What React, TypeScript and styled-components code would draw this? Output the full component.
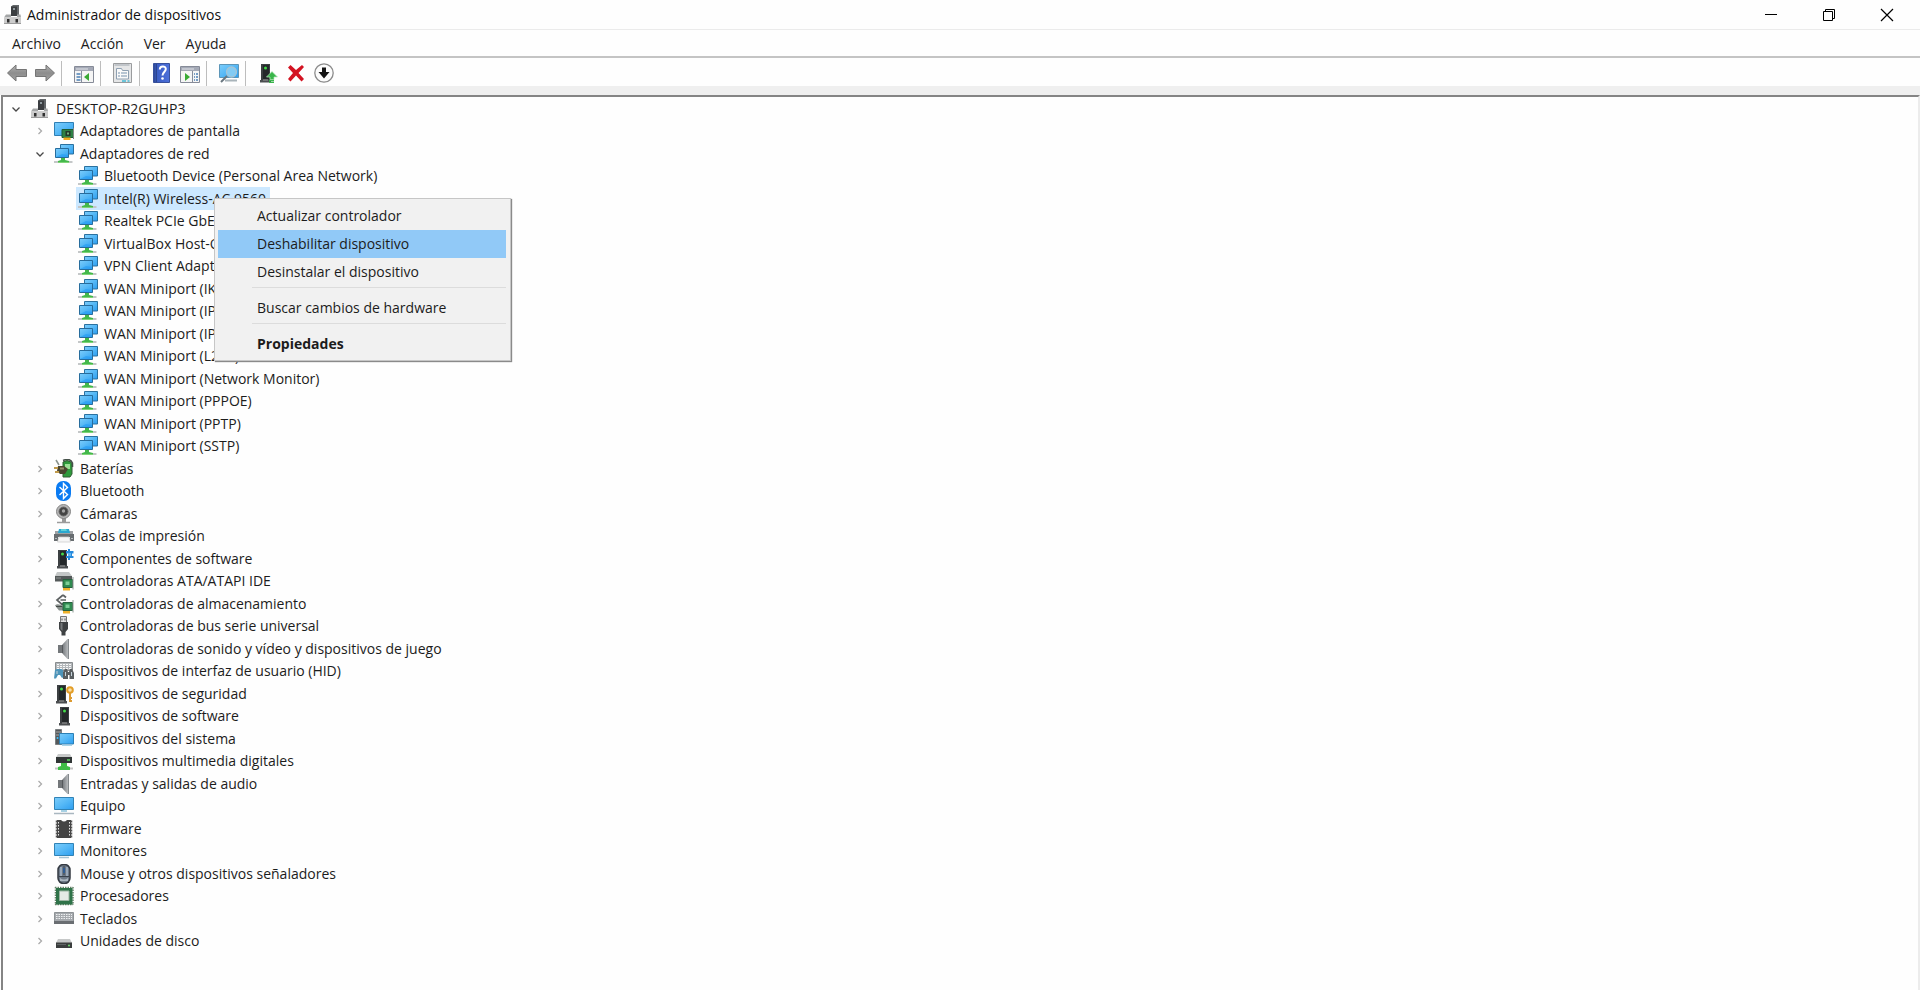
import React from "react";
import styled, { createGlobalStyle } from "styled-components";

const GlobalStyle = createGlobalStyle`
  * { box-sizing: border-box; }
  html, body, #root { height: 100%; }
  body {
    margin: 0;
    background: #fff;
    color: #1c1c1c;
    font-family: "Open Sans", "Noto Sans", sans-serif;
    font-size: 14px;
    line-height: 20px;
    overflow: hidden;
  }
  button {
    font: inherit;
    color: inherit;
    padding: 0;
    border: 0;
    background: none;
  }
`;

const Window = styled.div`
  display: flex;
  flex-direction: column;
  height: 100%;
  background: #fefefe;
`;

const TitleBar = styled.header`
  display: flex;
  align-items: center;
  gap: 4px;
  height: 30px;
  padding: 0 4px 0 3px;
  border-bottom: 1px solid #ebebeb;
`;

const Title = styled.h1`
  flex: 1;
  margin: 0;
  font-size: 14px;
  font-weight: 400;
  line-height: 20px;
  color: #111;
`;

const ControlGroup = styled.div`
  display: flex;
`;

const WindowControl = styled.button`
  display: flex;
  align-items: center;
  justify-content: center;
  width: 58px;
  height: 28px;
`;

const MenuBar = styled.nav`
  display: flex;
  align-items: center;
  gap: 20px;
  height: 28px;
  padding: 2px 12px 0;
  border-bottom: 2px solid #c4c4c4;
`;

const ToolBar = styled.div`
  display: flex;
  align-items: center;
  height: 28px;
  padding: 2px 7px 0;
`;

const ToolButton = styled.button`
  display: flex;
  width: 20px;
  height: 20px;
  & + & { margin-left: 8px; }
`;

const Separator = styled.span`
  width: 1px;
  height: 25px;
  margin: 0 12px 0 6px;
  background: #bdbdbd;
`;

const Strip = styled.div`
  height: 9px;
  background: #efefef;
`;

const Panel = styled.main`
  flex: 1;
  min-height: 0;
  border: 2px solid #848484;
  border-right-color: #ececec;
  border-bottom: 0;
  margin-left: 1px;
`;

const Tree = styled.ul`
  list-style: none;
  margin: 0;
  padding: 0;
`;

const Row = styled.li<{ $level: number }>`
  position: relative;
  display: flex;
  align-items: center;
  gap: 4px;
  height: 23px;
  padding-left: ${(p) => 5 + p.$level * 24}px;
  white-space: nowrap;
  &:nth-child(even) { height: 22px; }
`;

const Expander = styled.button`
  display: flex;
  align-items: center;
  justify-content: center;
  width: 16px;
  height: 16px;
`;

const ExpanderSpace = styled.span`
  width: 16px;
`;

const Entry = styled.span<{ $selected?: boolean }>`
  display: flex;
  align-items: center;
  gap: 6px;
  height: 100%;
  padding: 0 4px 0 2px;
  background: ${(p) => (p.$selected ? "#cce8ff" : "transparent")};
`;

const ContextMenu = styled.div`
  position: absolute;
  z-index: 1;
  top: 11px;
  left: 211px;
  width: 297px;
  padding: 3px 4px 2px 3px;
  background: #f1f1f1;
  border: 1px solid #c6c6c6;
  box-shadow: 1px 1px 1px #8a8a8a;
`;

const MenuItem = styled.button<{ $active?: boolean; $strong?: boolean }>`
  display: block;
  width: 100%;
  height: 28px;
  padding-left: 39px;
  text-align: left;
  font-weight: ${(p) => (p.$strong ? 700 : 400)};
  background: ${(p) => (p.$active ? "#91c9f7" : "transparent")};
`;

const MenuLine = styled.hr`
  height: 8px;
  margin: 0 0 0 34px;
  border: 0;
  background: linear-gradient(#dcdcdc, #dcdcdc) 0 1px / 100% 1px no-repeat;
`;

const DefinitionSheet = styled.svg`
  position: absolute;
`;

const Svg = ({ children }: { children: React.ReactNode }) => (
  <svg width="20" height="20" viewBox="0 0 20 20" aria-hidden="true">
    {children}
  </svg>
);

const Gradients = () => (
  <DefinitionSheet width="0" height="0" aria-hidden="true">
    <defs>
      <linearGradient id="screen" x1="0" y1="0" x2="1" y2="1">
        <stop offset="0" stopColor="#7ccdfb" />
        <stop offset="0.5" stopColor="#55b8f6" />
        <stop offset="1" stopColor="#2c9df0" />
      </linearGradient>
      <linearGradient id="metal" x1="0" y1="0" x2="1" y2="0">
        <stop offset="0" stopColor="#707478" />
        <stop offset="1" stopColor="#c4c7c9" />
      </linearGradient>
      <linearGradient id="arrow" x1="0" y1="0" x2="0" y2="1">
        <stop offset="0" stopColor="#b2b2b2" />
        <stop offset="0.5" stopColor="#8d8d8d" />
        <stop offset="1" stopColor="#a0a0a0" />
      </linearGradient>
      <linearGradient id="help" x1="0" y1="0" x2="1" y2="0">
        <stop offset="0" stopColor="#2d4793" />
        <stop offset="0.25" stopColor="#3c5fc6" />
        <stop offset="1" stopColor="#4c70da" />
      </linearGradient>
    </defs>
  </DefinitionSheet>
);

const ComputerIcon = () => (
  <Svg>
    <path d="M8 1.5 10 0h6v11H8z" fill="#63676a" />
    <path d="M8 1.5h6V11H8z" fill="#3b3e41" />
    <circle cx="11" cy="4" r="1" fill="#aebbc0" />
    <path d="M3 9.500h5V12h6V9.500h3.500L18 12.500H1z" fill="#a3a5a6" />
    <path d="M1 12.500h17V19H1z" fill="#cbcbcb" />
    <path d="M4 14h2.500v3.500H4zM12.500 14H15v3.500h-2.500z" fill="#303030" />
    <path d="M1 18h17v1H1z" fill="#9b9b9b" />
  </Svg>
);

const DisplayAdapterIcon = () => (
  <Svg>
    <path d="M.5 1.500h19v13H.5z" fill="url(#screen)" stroke="#2f7fb4" />
    <path d="M8 8.500h11.500v8H8z" fill="#2f8145" stroke="#1c5b34" />
    <path d="M11.500 10h5v5h-5z" fill="#24372a" />
    <path d="M13 11.500h2v2h-2z" fill="#77b27d" />
    <path d="M9.500 16.500h7V19h-7z" fill="#f0ac20" />
    <path d="M19.500 7v11" stroke="#858b87" />
  </Svg>
);

const NetworkIcon = () => (
  <Svg>
    <path d="M6.500.5h13v9.500h-13z" fill="url(#screen)" stroke="#2b719f" />
    <path d="M1.500 4.500h13v9h-13z" fill="url(#screen)" stroke="#276c9c" />
    <path d="m2 13 6-3 6 1v2z" fill="#239bf3" opacity=".6" />
    <path d="M7 14h4v2l4 1v2H4v-2l3-1z" fill="#43b84b" />
    <path d="M0 18h4M15 18h3.500" stroke="#c4c7c8" strokeWidth="2" />
    <path d="M4 18.500h11" stroke="#7fd477" />
  </Svg>
);

const BatteryIcon = () => (
  <Svg>
    <path d="M9 3q4-3 8 0l1 2v10l-2 3H9z" fill="#2f9a3c" stroke="#335a35" />
    <path d="M11 5h5v5h-5z" fill="#9be095" />
    <path d="M9 1.500q7-3 9.500 2.500v4" fill="none" stroke="#46514a" strokeWidth="1.500" />
    <path d="m2 1 3 5" stroke="#8a938d" strokeWidth="1.500" />
    <path d="M4 7h6l4 3-3 5H6l-3-3z" fill="#4a4630" />
    <path d="M0 9h4M1 13h4" stroke="#c09a4b" strokeWidth="2" />
    <path d="M6 8.500h4v2H6z" fill="#96906d" />
  </Svg>
);

const BluetoothIcon = () => (
  <Svg>
    <rect x="2" y="0" width="15" height="20" rx="7" fill="#0a7bf2" />
    <path d="m5.500 6 8 7.500-4 4V2.500l4 4-8 7.500" fill="none" stroke="#fff" strokeWidth="1.400" />
  </Svg>
);

const CameraIcon = () => (
  <Svg>
    <path d="M8 13h4v5H8z" fill="#999" />
    <path d="M3 18.500h13" stroke="#9c9c9c" strokeWidth="1.500" />
    <circle cx="9.500" cy="7.500" r="7" fill="#b7b7b7" stroke="#858585" />
    <circle cx="9.500" cy="7.500" r="4.500" fill="#454545" stroke="#6a6a6a" />
    <circle cx="9.500" cy="7" r="1.700" fill="#a4a4a4" />
  </Svg>
);

const PrinterIcon = () => (
  <Svg>
    <path d="M1 5h18v3H1z" fill="#9da1a4" />
    <path d="M5 3h10l1 4H4z" fill="#2aa7cf" />
    <path d="M7 3h5l1 2H7z" fill="#5fd0d8" />
    <path d="M0 8h20v7h-4v-4H4v4H0z" fill="#686d70" />
    <path d="M1 12.500h2M17 12.500h2" stroke="#b5babd" />
    <path d="M5 11h10l1.500 5h-13z" fill="#f6f6f6" stroke="#c9c9c9" strokeWidth=".7" />
  </Svg>
);

const Tower = ({ x = 5 }: { x?: number }) => (
  <g transform={`translate(${x} 0)`}>
    <path d="M1 1h9v16H1z" fill="#3c4042" />
    <path d="M3 2h6v14H3z" fill="#24282a" />
    <circle cx="5.500" cy="5" r="1.500" fill="#43da48" />
    <path d="M0 17h11v2.500H0z" fill="#4b4e50" />
    <path d="M3 17h5" stroke="#999" />
  </g>
);

const SoftwareComponentIcon = () => (
  <Svg>
    <Tower x={3} />
    <path d="M12 2h2V0h2v2h3.500v2.500H18V7h1.500v2H16v2h-2V9h-2V7h2V4.500h-2z" fill="#2689dc" />
    <path d="M14 4h3v3h-3z" fill="#5db5f2" />
  </Svg>
);

const BoardChip = () => (
  <>
    <path d="M9 8.500h9.500v8H9z" fill="#2f8a50" stroke="#27613e" />
    <path d="M11.500 10.500h4v3.500h-4z" fill="#7dcf97" />
    <path d="M9 17h7v2.500H9z" fill="#efb12b" />
    <path d="M19 6v12.500" stroke="#8e9995" />
  </>
);

const AtaIcon = () => (
  <Svg>
    <path d="M3 1h12l3 4H1z" fill="#c3c6c6" />
    <path d="M1 5h17v5.500H1z" fill="#555a5a" />
    <path d="M2 7h5" stroke="#8d9191" />
    <BoardChip />
  </Svg>
);

const StorageIcon = () => (
  <Svg>
    <path d="M9 1 3 6l5 4.500 2-2M9 1l3 2.500M6.500 6H12" fill="none" stroke="#5d6162" strokeWidth="1.700" />
    <path d="M1 11.500c4-3 6 1 9 0l4 5H5z" fill="#8a918e" />
    <path d="M2 12.500h6" stroke="#444a48" />
    <BoardChip />
  </Svg>
);

const UsbIcon = () => (
  <Svg>
    <path d="M6.500.5h6v6h-6z" fill="#dfdfdf" stroke="#777" />
    <path d="M8 2.500v2M11 2.500v2" stroke="#555" />
    <path d="M5 6h9v7l-2.500 3v3.500h-4V16L5 13z" fill="#3e4143" />
    <path d="M6.500 7v6l2 2V7z" fill="#75787a" />
  </Svg>
);

const SpeakerIcon = () => (
  <Svg>
    <path d="M4 6h4v8H4z" fill="#73777a" />
    <path d="m8 6 5.500-6H15v20h-1.500L8 14z" fill="url(#metal)" />
    <path d="M14.500 0v20" stroke="#858a8d" />
    <path d="M8.500 6v8" stroke="#55595c" />
  </Svg>
);

const HidIcon = () => (
  <Svg>
    <path d="M1.500 1.500h17v8h-17z" fill="#b3b7ba" stroke="#888c8e" />
    <path d="M3 3.500h14M3 5.500h14M3 7.500h14" stroke="#f8f8f8" strokeDasharray="2 1" />
    <path d="M0 17.500 1 9l2-1h4l2 1 1 7-2 1-2-3H4l-2 3.500z" fill="#4d94b9" />
    <path d="M9 18V11l2-3h2l1 3h1l1-3h2l2 4v6h-4.500v-4h-1.500v4z" fill="#585e61" />
    <path d="M3 10v3M11.500 11v4M17.500 11v4" stroke="#c4d2da" />
  </Svg>
);

const SecurityIcon = () => (
  <Svg>
    <Tower x={2} />
    <circle cx="16" cy="6" r="2.800" fill="#f7dfa9" stroke="#e39d27" strokeWidth="2" />
    <path d="M16 9v9M16 14h2M16 17h2" stroke="#dc9a31" strokeWidth="2" />
  </Svg>
);

const TowerIcon = () => (
  <Svg>
    <Tower />
  </Svg>
);

const SystemIcon = () => (
  <Svg>
    <path d="M1.500.500h6v15h-6z" fill="#55595b" stroke="#7c8082" />
    <path d="M2 3h5M2 6h5" stroke="#aaa" />
    <circle cx="3.500" cy="9" r="1" fill="#47c6ff" />
    <path d="M5.500 4.500h14v10.500h-14z" fill="url(#screen)" stroke="#2c80b5" />
    <path d="M8 16.500h10" stroke="#aad4e7" />
  </Svg>
);

const MediaIcon = () => (
  <Svg>
    <path d="M4 3h12l2 3.500H2z" fill="#c7c9c9" />
    <path d="M2 6h16v6H2z" fill="#313636" />
    <path d="M13 9h3" stroke="#5bdb60" strokeWidth="1.500" />
    <path d="M7 12h6v3l3 1v3H4v-3l3-1z" fill="#3fbd46" />
    <path d="M1 17.500h3M16 17.500h3" stroke="#c4c4c4" strokeWidth="2" />
  </Svg>
);

const PcIcon = () => (
  <Svg>
    <path d="M.5 1.500h19v12H.500z" fill="url(#screen)" stroke="#3183b6" />
    <path d="M7 14h6v2H7z" fill="#a7d1e4" />
    <path d="M0 17.500h20" stroke="#a9b7c0" strokeWidth="1.500" />
  </Svg>
);

const FirmwareIcon = () => (
  <Svg>
    <path d="M3 1h4q3 3 6 0h4v18H3z" fill="#444" />
    <path d="M2.500 1.500v17M17.500 1.500v17" stroke="#555" strokeWidth="1.500" strokeDasharray="2 1" />
    <path d="M4.500 3v15M15.500 3v15" stroke="#e5e5e5" strokeDasharray="1.500 1.500" />
  </Svg>
);

const MonitorIcon = () => (
  <Svg>
    <path d="M.5 2.500h19v12H.500z" fill="url(#screen)" stroke="#3183b6" />
    <path d="M5 16.500h10" stroke="#a6c3d3" strokeWidth="1.500" />
  </Svg>
);

const MouseIcon = () => (
  <Svg>
    <rect x="4" y=".5" width="12" height="19" rx="5.500" fill="#6e7a88" stroke="#343a42" strokeWidth="1.500" />
    <path d="M7 3v9M13 3v9" stroke="#a8b8c9" strokeWidth="1.500" />
    <path d="M10 2v9M5 12.500h10" stroke="#39424d" />
    <path d="M9 4h2v5H9z" fill="#2f5d94" />
    <path d="M6 14q4 3 8 0v3H6z" fill="#aab5c0" />
  </Svg>
);

const CpuIcon = () => (
  <Svg>
    <path d="M1.500 1v18M19 1v18M1 1.500h18M1 18.500h18" stroke="#668068" strokeWidth="1.500" strokeDasharray="1.500 1" />
    <path d="M2 2h16.500v16.500H2z" fill="#2f7349" />
    <path d="M5.500 5h9.500v9.500H5.500z" fill="#e5eae5" stroke="#9ab4a1" />
  </Svg>
);

const KeyboardIcon = () => (
  <Svg>
    <path d="M.5 3.500h19v11H.500z" fill="#a5a9ad" stroke="#8e9396" />
    <path d="M2 5.500h16M2 7.500h16M2 9.500h16" stroke="#eef0f1" strokeDasharray="1.500 1" />
    <path d="M0 12h20v3H0z" fill="#6a6e72" />
  </Svg>
);

const DiskIcon = () => (
  <Svg>
    <path d="M4 8h12l2 4H2z" fill="#c6c8c8" />
    <path d="M2 11.500h16V17H2z" fill="#3a3d3d" />
    <path d="M3 13.500h9" stroke="#5e6363" />
    <circle cx="15" cy="14.500" r="1" fill="#73dd72" />
  </Svg>
);

const ArrowLeftIcon = () => (
  <Svg>
    <path d="M.5 10 9 2V6.500h10.500v7H9V18z" fill="url(#arrow)" stroke="#757575" />
  </Svg>
);

const ArrowRightIcon = () => (
  <Svg>
    <path d="M19.500 10 11 2V6.500H.500v7H11V18z" fill="url(#arrow)" stroke="#757575" />
  </Svg>
);

const ConsoleTreeIcon = () => (
  <Svg>
    <path d="M.5 3.500h19v16H.500z" fill="#f5f5f5" stroke="#868b98" />
    <path d="M1 4h18v4H1z" fill="#a4a9b6" />
    <path d="M2 6h12" stroke="#e1e3e8" />
    <path d="M7.500 8v11" stroke="#858d9c" />
    <path d="M2.500 11h4M2.500 14h4M2.500 17h4" stroke="#4b80b5" strokeWidth="1.500" />
    <path d="M15 10v8l-5-4z" fill="#3aaa35" />
  </Svg>
);

const ActionPaneIcon = () => (
  <Svg>
    <path d="M.5 3.500h19v16H.500z" fill="#f5f5f5" stroke="#868b98" />
    <path d="M1 4h18v4H1z" fill="#a4a9b6" />
    <path d="M2 6h12" stroke="#e1e3e8" />
    <path d="M12.500 8v11" stroke="#858d9c" />
    <path d="M14 11h4M14 14h4M14 17h4" stroke="#4b80b5" strokeWidth="1.500" strokeDasharray="1 1 2 0" />
    <path d="M5 10v8l5-4z" fill="#3aaa35" />
  </Svg>
);

const PropertiesIcon = () => (
  <Svg>
    <path d="M.5.500h18v19H.500z" fill="#e5e6e7" stroke="#9a9c9e" />
    <path d="M1.500 2h15" stroke="#9da5ad" />
    <path d="M3.500 5.500h5l1 2h6v8.500h-12z" fill="#fafafa" stroke="#8ea0b2" />
    <path d="M5 10h2M8 10h6M5 13h2M8 13h6" stroke="#7692ad" />
    <path d="M9 18h4M14.500 18h2" stroke="#43b9d5" strokeWidth="1.500" />
  </Svg>
);

const HelpIcon = () => (
  <Svg>
    <path d="M1.500.5h16v19h-16z" fill="url(#help)" stroke="#37509c" />
    <path d="M4.500 1v18" stroke="#2b458f" />
    <path d="M7.800 6.500c0-4 6-4 6-.5 0 3-3.300 3-3.300 6.500" fill="none" stroke="#fff" strokeWidth="2" />
    <circle cx="10.500" cy="15.500" r="1.300" fill="#fff" />
  </Svg>
);

const ScanIcon = () => (
  <Svg>
    <path d="M.5 1.500h19v13H.500z" fill="url(#screen)" stroke="#5d96b8" />
    <path d="M6 17.500h12" stroke="#a9b4ba" strokeWidth="2" />
    <path d="m8 13-6 6" stroke="#697780" strokeWidth="2" />
    <circle cx="12.500" cy="9" r="5" fill="#83cbf3" stroke="#a5c4d4" strokeWidth="1.300" />
  </Svg>
);

const UpdateIcon = () => (
  <Svg>
    <Tower x={2} />
    <path d="m14 8.500 5.500 5.500H16v2.500h-4V14H8.500z" fill="#39b54a" stroke="#b9e9bd" strokeWidth=".7" />
    <path d="M11 17.500h5M11 19.300h5" stroke="#39b54a" strokeWidth="1.300" />
  </Svg>
);

const RemoveIcon = () => (
  <Svg>
    <path d="M2 4.500 4.500 2l5.500 5L16 2l2 2-5.500 6 5.500 6-2.500 2.500-5.500-6-5.500 6L2 16l5-6z" fill="#d31322" />
  </Svg>
);

const DisableIcon = () => (
  <Svg>
    <circle cx="10" cy="10" r="9.200" fill="#fcfcfc" stroke="#8b8b8b" strokeWidth="1.300" />
    <path d="M8 4.500h4V9h3.500L10 15.500 4.500 9H8z" fill="#141414" />
  </Svg>
);

type Glyph = () => React.JSX.Element;

type DeviceNode = {
  name: string;
  icon: Glyph;
  level: number;
  open?: boolean;
  selected?: boolean;
};

const adapters = [
  "Bluetooth Device (Personal Area Network)",
  "Intel(R) Wireless-AC 9560",
  "Realtek PCIe GbE Family Controller",
  "VirtualBox Host-Only Ethernet Adapter",
  "VPN Client Adapter - VPN",
  "WAN Miniport (IKEv2)",
  "WAN Miniport (IP)",
  "WAN Miniport (IPv6)",
  "WAN Miniport (L2TP)",
  "WAN Miniport (Network Monitor)",
  "WAN Miniport (PPPOE)",
  "WAN Miniport (PPTP)",
  "WAN Miniport (SSTP)",
];

const categories: [string, Glyph][] = [
  ["Baterías", BatteryIcon],
  ["Bluetooth", BluetoothIcon],
  ["Cámaras", CameraIcon],
  ["Colas de impresión", PrinterIcon],
  ["Componentes de software", SoftwareComponentIcon],
  ["Controladoras ATA/ATAPI IDE", AtaIcon],
  ["Controladoras de almacenamiento", StorageIcon],
  ["Controladoras de bus serie universal", UsbIcon],
  ["Controladoras de sonido y vídeo y dispositivos de juego", SpeakerIcon],
  ["Dispositivos de interfaz de usuario (HID)", HidIcon],
  ["Dispositivos de seguridad", SecurityIcon],
  ["Dispositivos de software", TowerIcon],
  ["Dispositivos del sistema", SystemIcon],
  ["Dispositivos multimedia digitales", MediaIcon],
  ["Entradas y salidas de audio", SpeakerIcon],
  ["Equipo", PcIcon],
  ["Firmware", FirmwareIcon],
  ["Monitores", MonitorIcon],
  ["Mouse y otros dispositivos señaladores", MouseIcon],
  ["Procesadores", CpuIcon],
  ["Teclados", KeyboardIcon],
  ["Unidades de disco", DiskIcon],
];

const nodes: DeviceNode[] = [
  { name: "DESKTOP-R2GUHP3", icon: ComputerIcon, level: 0, open: true },
  { name: "Adaptadores de pantalla", icon: DisplayAdapterIcon, level: 1 },
  { name: "Adaptadores de red", icon: NetworkIcon, level: 1, open: true },
  ...adapters.map((name) => ({
    name,
    icon: NetworkIcon,
    level: 2,
    selected: name.startsWith("Intel"),
  })),
  ...categories.map(([name, icon]) => ({ name, icon, level: 1 })),
];

const tools: ([string, Glyph] | null)[] = [
  ["Atrás", ArrowLeftIcon],
  ["Adelante", ArrowRightIcon],
  null,
  ["Mostrar u ocultar árbol de consola", ConsoleTreeIcon],
  null,
  ["Propiedades", PropertiesIcon],
  null,
  ["Ayuda", HelpIcon],
  ["Mostrar u ocultar panel de acciones", ActionPaneIcon],
  null,
  ["Buscar cambios de hardware", ScanIcon],
  null,
  ["Actualizar controlador", UpdateIcon],
  ["Desinstalar el dispositivo", RemoveIcon],
  ["Deshabilitar dispositivo", DisableIcon],
];

const Chevron = ({ open }: { open?: boolean }) => (
  <svg width="10" height="10" viewBox="0 0 10 10" fill="none" aria-hidden="true">
    {open ? (
      <path d="m1.500 3.500 3.500 3.500 3.500-3.500" stroke="#484848" strokeWidth="1.300" />
    ) : (
      <path d="m3.500 2 3 3-3 3" stroke="#ababab" strokeWidth="1.300" />
    )}
  </svg>
);

const DeviceMenu = () => (
  <ContextMenu role="menu">
    <MenuItem role="menuitem">Actualizar controlador</MenuItem>
    <MenuItem role="menuitem" $active>Deshabilitar dispositivo</MenuItem>
    <MenuItem role="menuitem">Desinstalar el dispositivo</MenuItem>
    <MenuLine />
    <MenuItem role="menuitem">Buscar cambios de hardware</MenuItem>
    <MenuLine />
    <MenuItem role="menuitem" $strong>Propiedades</MenuItem>
  </ContextMenu>
);

const TreeRow = ({ node }: { node: DeviceNode }) => {
  const Icon = node.icon;
  return (
    <Row $level={node.level} role="treeitem" aria-level={node.level + 1} aria-selected={!!node.selected}>
      {node.level < 2 ? (
        <Expander aria-label={`${node.open ? "Contraer" : "Expandir"} ${node.name}`}>
          <Chevron open={node.open} />
        </Expander>
      ) : (
        <ExpanderSpace />
      )}
      <Entry $selected={node.selected}>
        <Icon />
        <span>{node.name}</span>
      </Entry>
      {node.selected && <DeviceMenu />}
    </Row>
  );
};

const Controls = () => (
  <ControlGroup>
    <WindowControl aria-label="Minimizar">
      <svg width="14" height="14" viewBox="0 0 14 14" aria-hidden="true">
        <path d="M1 6.500h12" stroke="#000" />
      </svg>
    </WindowControl>
    <WindowControl aria-label="Restaurar">
      <svg width="14" height="14" viewBox="0 0 14 14" fill="none" stroke="#000" aria-hidden="true">
        <path d="M1.500 3.500h9v9h-9zM3.500 3.500v-2h9v9h-2" />
      </svg>
    </WindowControl>
    <WindowControl aria-label="Cerrar">
      <svg width="14" height="14" viewBox="0 0 14 14" aria-hidden="true">
        <path d="m1 1 12 12M13 1 1 13" stroke="#000" strokeWidth="1.200" />
      </svg>
    </WindowControl>
  </ControlGroup>
);

export default function App() {
  return (
    <Window>
      <GlobalStyle />
      <Gradients />
      <TitleBar>
        <ComputerIcon />
        <Title>Administrador de dispositivos</Title>
        <Controls />
      </TitleBar>
      <MenuBar>
        {["Archivo", "Acción", "Ver", "Ayuda"].map((label) => (
          <button key={label}>{label}</button>
        ))}
      </MenuBar>
      <ToolBar role="toolbar">
        {tools.map((tool, i) => {
          if (!tool) return <Separator key={i} />;
          const [label, Icon] = tool;
          return (
            <ToolButton key={i} aria-label={label}>
              <Icon />
            </ToolButton>
          );
        })}
      </ToolBar>
      <Strip />
      <Panel>
        <Tree role="tree">
          {nodes.map((node) => (
            <TreeRow key={node.name} node={node} />
          ))}
        </Tree>
      </Panel>
    </Window>
  );
}
